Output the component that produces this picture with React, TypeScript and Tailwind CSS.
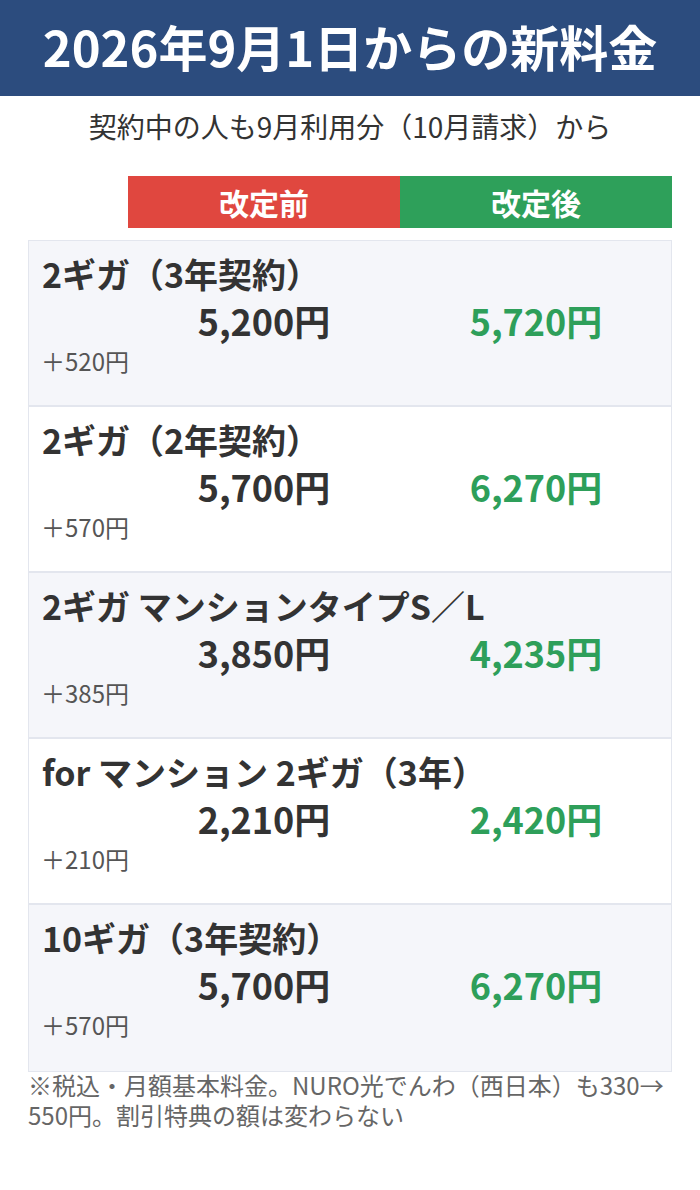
const plans = [
  { name: "2ギガ（3年契約）", before: "5,200円", after: "5,720円", diff: "＋520円" },
  { name: "2ギガ（2年契約）", before: "5,700円", after: "6,270円", diff: "＋570円" },
  { name: "2ギガ マンションタイプS／L", before: "3,850円", after: "4,235円", diff: "＋385円" },
  { name: "for マンション 2ギガ（3年）", before: "2,210円", after: "2,420円", diff: "＋210円" },
  { name: "10ギガ（3年契約）", before: "5,700円", after: "6,270円", diff: "＋570円" },
];

const PlanRow = ({ plan, shaded }: { plan: (typeof plans)[number]; shaded: boolean }) => (
  <div
    className={`h-[166px] border-b-2 border-[#e3e6ee] last:border-b-0 pt-[13px] ${
      shaded ? "bg-[#f5f6fa]" : "bg-white"
    }`}
  >
    <div className="pl-[13px] text-[34px] leading-[40px] font-bold text-[#333]">{plan.name}</div>
    <div className="grid grid-cols-[99px_272px_272px] text-[36px] leading-[52px] font-bold">
      <div />
      <div className="text-center text-[#333]">{plan.before}</div>
      <div className="text-center text-[#2e9f5a]">{plan.after}</div>
    </div>
    <div className="mt-[3px] pl-[12px] text-[24px] leading-[24px] text-[#555]">{plan.diff}</div>
  </div>
);

const App = (): JSX.Element => {
  return (
    <div className="w-[700px] min-h-[1190px] bg-white font-['Noto_Sans_CJK_JP',sans-serif]">
      <div className="h-[96px] bg-[#2c4c7e] flex items-center justify-center pb-[5px]">
        <h1 className="text-white font-bold text-[49px] leading-none">2026年9月1日からの新料金</h1>
      </div>
      <p className="h-[80px] flex items-center justify-center text-[28px] text-[#333] pb-[21px]">
        契約中の人も9月利用分（10月請求）から
      </p>
      <div className="mx-[28px] grid grid-cols-[100px_272px_272px] h-[52px] text-white font-bold text-[30px]">
        <div />
        <div className="bg-[#e0473f] flex items-center justify-center">改定前</div>
        <div className="bg-[#2ea05a] flex items-center justify-center">改定後</div>
      </div>
      <div className="mx-[28px] mt-[12px] border border-[#e3e6ee]">
        {plans.map((plan, i) => (
          <PlanRow key={i} plan={plan} shaded={i % 2 === 0} />
        ))}
      </div>
      <p className="mx-[28px] -mt-[2px] text-[24px] leading-[30px] text-[#666]">
        ※税込・月額基本料金。NURO光でんわ（西日本）も330→<wbr />550円。割引特典の額は変わらない
      </p>
    </div>
  );
};

export default App;
